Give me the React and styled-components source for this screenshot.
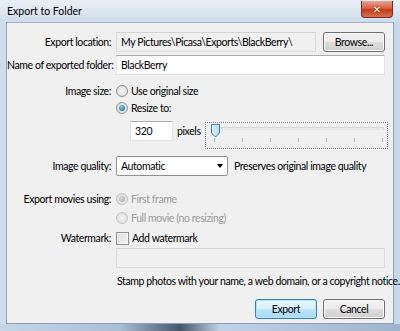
import React from "react";
import styled, { createGlobalStyle } from "styled-components";

const Global = createGlobalStyle`
  html, body { margin: 0; padding: 0; background: #fff; }
  body { font-family: Lato, "Noto Sans", sans-serif; font-size: 10.5px; letter-spacing: -0.4px; color: #000; }
  * { box-sizing: border-box; }
`;

const Window = styled.div`
  width: 400px;
  height: 331px;
  display: flex;
  flex-direction: column;
  background: linear-gradient(90deg, #cfdcec 0%, #e3ebf4 30%, #d6e2ef 60%, #c7d8ea 100%);
  position: relative;
  overflow: hidden;
`;

const TitleBar = styled.div`
  height: 22px;
  flex: none;
  display: flex;
  align-items: center;
  padding-left: 7px;
  font-size: 10.5px;
  letter-spacing: 0;
  color: #000;
  background: linear-gradient(180deg, #e9eff6 0%, #dbe5f0 60%, #cddbea 100%);
`;

const CloseButton = styled.div`
  position: absolute;
  top: 1px;
  right: 7px;
  width: 32px;
  height: 17px;
  border: 1px solid #7a2a22;
  border-top: none;
  border-radius: 0 0 4px 4px;
  background: linear-gradient(180deg, #e8a493 0%, #d6603f 45%, #c23b1c 55%, #d8714f 100%);
  display: flex;
  align-items: center;
  justify-content: center;
  color: #fff;
  font: bold 10px "DejaVu Sans", sans-serif;
  letter-spacing: 0;
  text-shadow: 0 0 2px #5a1a10;
`;

const Middle = styled.div`
  flex: 1;
  display: flex;
  padding: 0 6px;
  min-height: 0;
  min-width: 0;
`;

const Client = styled.div`
  flex: 1;
  min-width: 0;
  background: #f0f0f0;
  border: 1px solid #8aa0bb;
  border-top-color: #9fb2c8;
  padding-top: 9px;
  display: flex;
  flex-direction: column;
`;

const BottomEdge = styled.div`
  height: 7px;
  flex: none;
  background: linear-gradient(90deg, #c6d6e8 0%, #a9bfd6 30%, #46566a 45%, #c0d2e6 55%, #9eb4cc 100%);
`;

const Row = styled.div`
  display: grid;
  grid-template-columns: 104px minmax(0, 1fr);
  column-gap: 5px;
  align-items: center;
  margin-top: ${(p) => p.$mt || 0}px;
  min-height: ${(p) => p.$h || 16}px;
`;

const Label = styled.div`
  text-align: right;
  white-space: nowrap;
  color: #000;
`;

const Controls = styled.div`
  display: flex;
  align-items: center;
  gap: ${(p) => p.$gap ?? 6}px;
  padding-right: 8px;
  min-width: 0;
`;

const Field = styled.div`
  height: 20px;
  min-width: 0;
  display: flex;
  align-items: center;
  padding-left: 4px;
  border: 1px solid ${(p) => (p.$readonly ? "#dcdcdc" : "#e2e3ea")};
  border-top-color: ${(p) => (p.$readonly ? "#d3d3d3" : "#abadb3")};
  background: ${(p) => (p.$readonly ? "#f0f0f0" : "#fff")};
  white-space: nowrap;
  overflow: hidden;
  flex: 1;
`;

const Button = styled.div`
  width: 62px;
  height: 20px;
  flex: none;
  border-radius: 3px;
  border: 1px solid ${(p) => (p.$default ? "#3c7fb1" : "#707070")};
  box-shadow: ${(p) => (p.$default ? "inset 0 0 0 1px #aee4f8" : "inset 0 0 0 1px #fbfbfb")};
  background: ${(p) =>
    p.$default
      ? "linear-gradient(180deg, #eaf6fd 0%, #d9f0fc 48%, #bee6fd 52%, #a7d9f5 100%)"
      : "linear-gradient(180deg, #f2f2f2 0%, #ebebeb 48%, #dddddd 52%, #cfcfcf 100%)"};
  display: flex;
  align-items: center;
  justify-content: center;
  color: #000;
`;

const RadioDot = styled.span`
  width: 12px;
  height: 12px;
  border-radius: 50%;
  border: 1px solid ${(p) => (p.$disabled ? "#c2c2c2" : "#8e8f8f")};
  background: radial-gradient(circle at 50% 50%, #f4f4f4 0%, #dadada 100%);
  display: inline-flex;
  align-items: center;
  justify-content: center;
  flex: none;
  &::after {
    content: "";
    width: 6px;
    height: 6px;
    border-radius: 50%;
    display: ${(p) => (p.$checked ? "block" : "none")};
    background: ${(p) =>
      p.$disabled
        ? "radial-gradient(circle at 40% 35%, #d8d8d8, #a8a8a8)"
        : "radial-gradient(circle at 40% 35%, #7fd1f2, #174e86)"};
  }
`;

const Choice = styled.div`
  display: flex;
  align-items: center;
  gap: 3px;
  color: ${(p) => (p.$disabled ? "#9a9a9a" : "#000")};
  white-space: nowrap;
`;

const CheckBox = styled.span`
  width: 13px;
  height: 13px;
  border: 1px solid #8e8f8f;
  background: linear-gradient(135deg, #dcdcdc 0%, #f4f4f4 100%);
  box-shadow: inset 0 0 0 1px #f6f6f6;
  flex: none;
`;

const Indented = styled.div`
  display: flex;
  align-items: flex-start;
  gap: 4px;
  margin-top: 5px;
  padding-left: 123px;
  padding-right: 5px;
`;

const SizeInput = styled.div`
  width: 43px;
  height: 20px;
  background: #fff;
  border: 1px solid #e2e3ea;
  border-top-color: #abadb3;
  display: flex;
  align-items: center;
  padding-left: 4px;
`;

const PixelsText = styled.div`
  height: 20px;
  display: flex;
  align-items: center;
`;

const SliderBox = styled.div`
  flex: 1;
  height: 27px;
  margin-top: 1px;
  border: 1px dotted #777;
  position: relative;
`;

const Track = styled.div`
  position: absolute;
  left: 10px;
  right: 3px;
  top: 4px;
  height: 3px;
  border: 1px solid #d6d6d6;
  border-bottom-color: #e7e7e7;
  background: #e7eaea;
`;

const Ticks = styled.div`
  position: absolute;
  left: 8px;
  right: 4px;
  top: 15px;
  display: flex;
  justify-content: space-between;
`;

const Tick = styled.span`
  width: 1px;
  height: 4px;
  background: #b4b4b4;
`;

const Thumb = styled.svg`
  position: absolute;
  left: 4px;
  top: 1px;
`;

const Select = styled.div`
  width: 112px;
  height: 20px;
  flex: none;
  border: 1px solid #8e8f8f;
  border-radius: 2px;
  background: #fff;
  display: flex;
  align-items: center;
  justify-content: space-between;
  padding: 0 4px;
`;

const Arrow = styled.span`
  width: 0;
  height: 0;
  border-left: 3.5px solid transparent;
  border-right: 3.5px solid transparent;
  border-top: 4px solid #000;
`;

const Note = styled.div`
  margin-top: 5px;
  padding-left: 110px;
  white-space: nowrap;
  line-height: 16px;
`;

const Footer = styled.div`
  display: flex;
  justify-content: flex-end;
  gap: 6px;
  margin-top: 10px;
  padding-right: 8px;
`;

export default function App() {
  const ticks = Array.from({ length: 7 });
  return (
    <>
      <Global />
      <Window>
        <TitleBar>Export to Folder</TitleBar>
        <CloseButton>✕</CloseButton>
        <Middle>
          <Client>
            <Row $h={20}>
              <Label>Export location:</Label>
              <Controls $gap={7}>
                <Field $readonly>My Pictures\Picasa\Exports\BlackBerry\</Field>
                <Button>Browse...</Button>
              </Controls>
            </Row>
            <Row $h={20} $mt={3}>
              <Label>Name of exported folder:</Label>
              <Controls>
                <Field>BlackBerry</Field>
              </Controls>
            </Row>
            <Row $mt={8}>
              <Label>Image size:</Label>
              <Choice>
                <RadioDot />
                Use original size
              </Choice>
            </Row>
            <Row $mt={1}>
              <span />
              <Choice>
                <RadioDot $checked />
                Resize to:
              </Choice>
            </Row>
            <Indented>
              <SizeInput>320</SizeInput>
              <PixelsText>pixels</PixelsText>
              <SliderBox>
                <Track />
                <Ticks>
                  {ticks.map((_, i) => (
                    <Tick key={i} />
                  ))}
                </Ticks>
                <Thumb width="11" height="14" viewBox="0 0 11 14">
                  <defs>
                    <linearGradient id="tg" x1="0" x2="1" y1="0" y2="0">
                      <stop offset="0" stopColor="#e9f6fd" />
                      <stop offset="1" stopColor="#a7d9f5" />
                    </linearGradient>
                  </defs>
                  <path
                    d="M1.5 0.5 H9.5 V9 L5.5 13 L1.5 9 Z"
                    fill="url(#tg)"
                    stroke="#3c7fb1"
                    strokeWidth="1"
                  />
                </Thumb>
              </SliderBox>
            </Indented>
            <Row $h={20} $mt={7}>
              <Label>Image quality:</Label>
              <Controls>
                <Select>
                  Automatic
                  <Arrow />
                </Select>
                <span>Preserves original image quality</span>
              </Controls>
            </Row>
            <Row $mt={15}>
              <Label>Export movies using:</Label>
              <Choice $disabled>
                <RadioDot $checked $disabled />
                First frame
              </Choice>
            </Row>
            <Row $mt={3}>
              <span />
              <Choice $disabled>
                <RadioDot $disabled />
                Full movie (no resizing)
              </Choice>
            </Row>
            <Row $mt={4}>
              <Label>Watermark:</Label>
              <Choice>
                <CheckBox />
                Add watermark
              </Choice>
            </Row>
            <Row $h={20} $mt={2}>
              <span />
              <Controls>
                <Field $readonly />
              </Controls>
            </Row>
            <Note>Stamp photos with your name, a web domain, or a copyright notice.</Note>
            <Footer>
              <Button $default>Export</Button>
              <Button>Cancel</Button>
            </Footer>
          </Client>
        </Middle>
        <BottomEdge />
      </Window>
    </>
  );
}
